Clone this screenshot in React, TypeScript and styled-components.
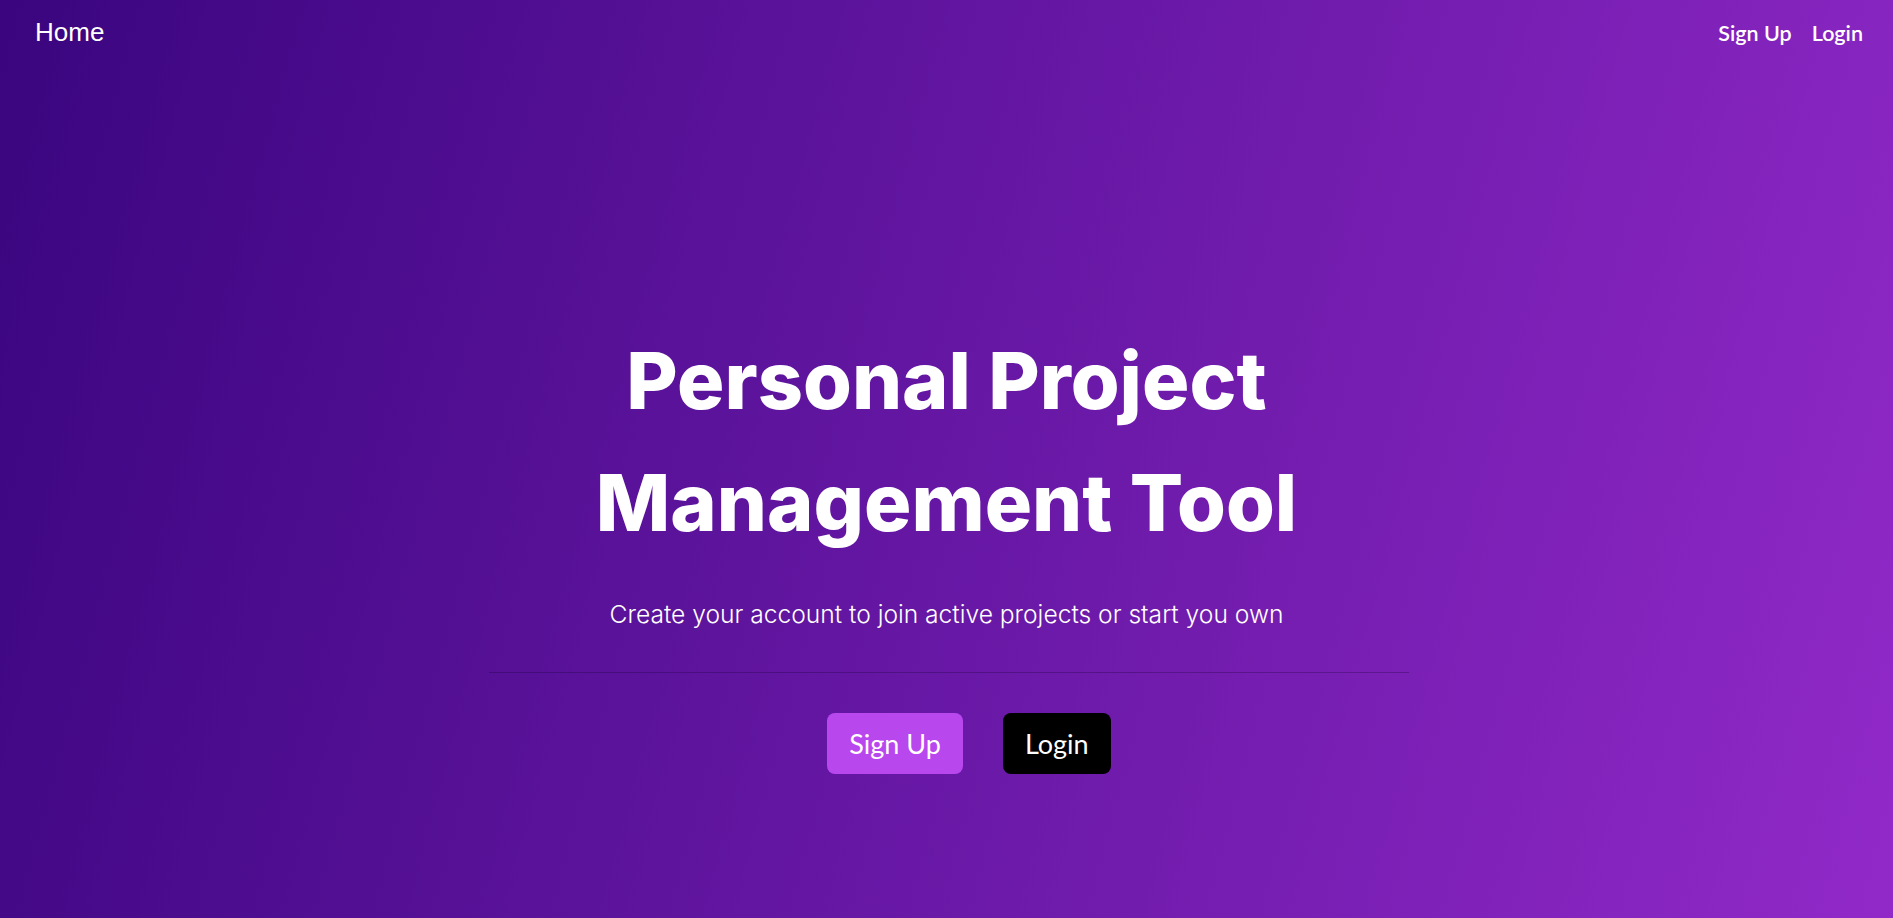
import React from "react";
import styled, { createGlobalStyle } from "styled-components";

const GlobalStyle = createGlobalStyle`
  html, body {
    margin: 0;
    padding: 0;
  }
  body {
    font-family: "Liberation Sans", Arial, sans-serif;
    color: #fff;
  }
  * { box-sizing: border-box; }
`;

const Page = styled.div`
  min-height: 100vh;
  display: flex;
  flex-direction: column;
  background: linear-gradient(105deg, #3a057f 0%, #9129c8 100%);
`;

const NavBar = styled.nav`
  display: flex;
  align-items: baseline;
  justify-content: space-between;
  padding: 17px 30px 17px 35px;
`;

const Brand = styled.a`
  font-family: "Liberation Sans", Arial, sans-serif;
  font-size: 26px;
  color: #fff;
  text-decoration: none;
`;

const NavLinks = styled.div`
  display: flex;
  align-items: baseline;
  gap: 20px;
`;

const NavLink = styled.a`
  font-family: Lato, "Liberation Sans", sans-serif;
  font-weight: 600;
  font-size: 21.5px;
  color: #fff;
  text-decoration: none;
`;

const Hero = styled.main`
  display: flex;
  flex-direction: column;
  align-items: center;
  padding-top: 254px;
`;

const Title = styled.h1`
  margin: 0;
  font-family: Inter, "Liberation Sans", sans-serif;
  font-weight: 800;
  font-size: 79px;
  line-height: 122px;
  text-align: center;
  color: #fff;
`;

const Subtitle = styled.p`
  margin: 33px 0 0;
  font-family: Inter, "Liberation Sans", sans-serif;
  font-weight: 300;
  font-size: 24.6px;
  line-height: 36px;
  color: #fff;
`;

const Divider = styled.hr`
  width: 920px;
  margin: 40px 0 0 4px;
  border: none;
  border-top: 1px solid rgba(20, 0, 50, 0.28);
`;

const ButtonRow = styled.div`
  display: flex;
  gap: 40px;
  margin: 40px 0 0 45px;
`;

const Button = styled.a<{ $variant: "primary" | "dark" }>`
  display: inline-block;
  padding: 13px 22px;
  border-radius: 8px;
  font-family: Lato, "Liberation Sans", sans-serif;
  font-size: 27px;
  line-height: 35px;
  color: #fff;
  text-decoration: none;
  background: ${(p) => (p.$variant === "primary" ? "#b847ee" : "#000")};
`;

export default function App() {
  return (
    <>
      <GlobalStyle />
      <Page>
        <NavBar>
          <Brand href="#">Home</Brand>
          <NavLinks>
            <NavLink href="#">Sign Up</NavLink>
            <NavLink href="#">Login</NavLink>
          </NavLinks>
        </NavBar>
        <Hero>
          <Title>
            Personal Project
            <br />
            Management Tool
          </Title>
          <Subtitle>Create your account to join active projects or start you own</Subtitle>
          <Divider />
          <ButtonRow>
            <Button href="#" $variant="primary">Sign Up</Button>
            <Button href="#" $variant="dark">Login</Button>
          </ButtonRow>
        </Hero>
      </Page>
    </>
  );
}
